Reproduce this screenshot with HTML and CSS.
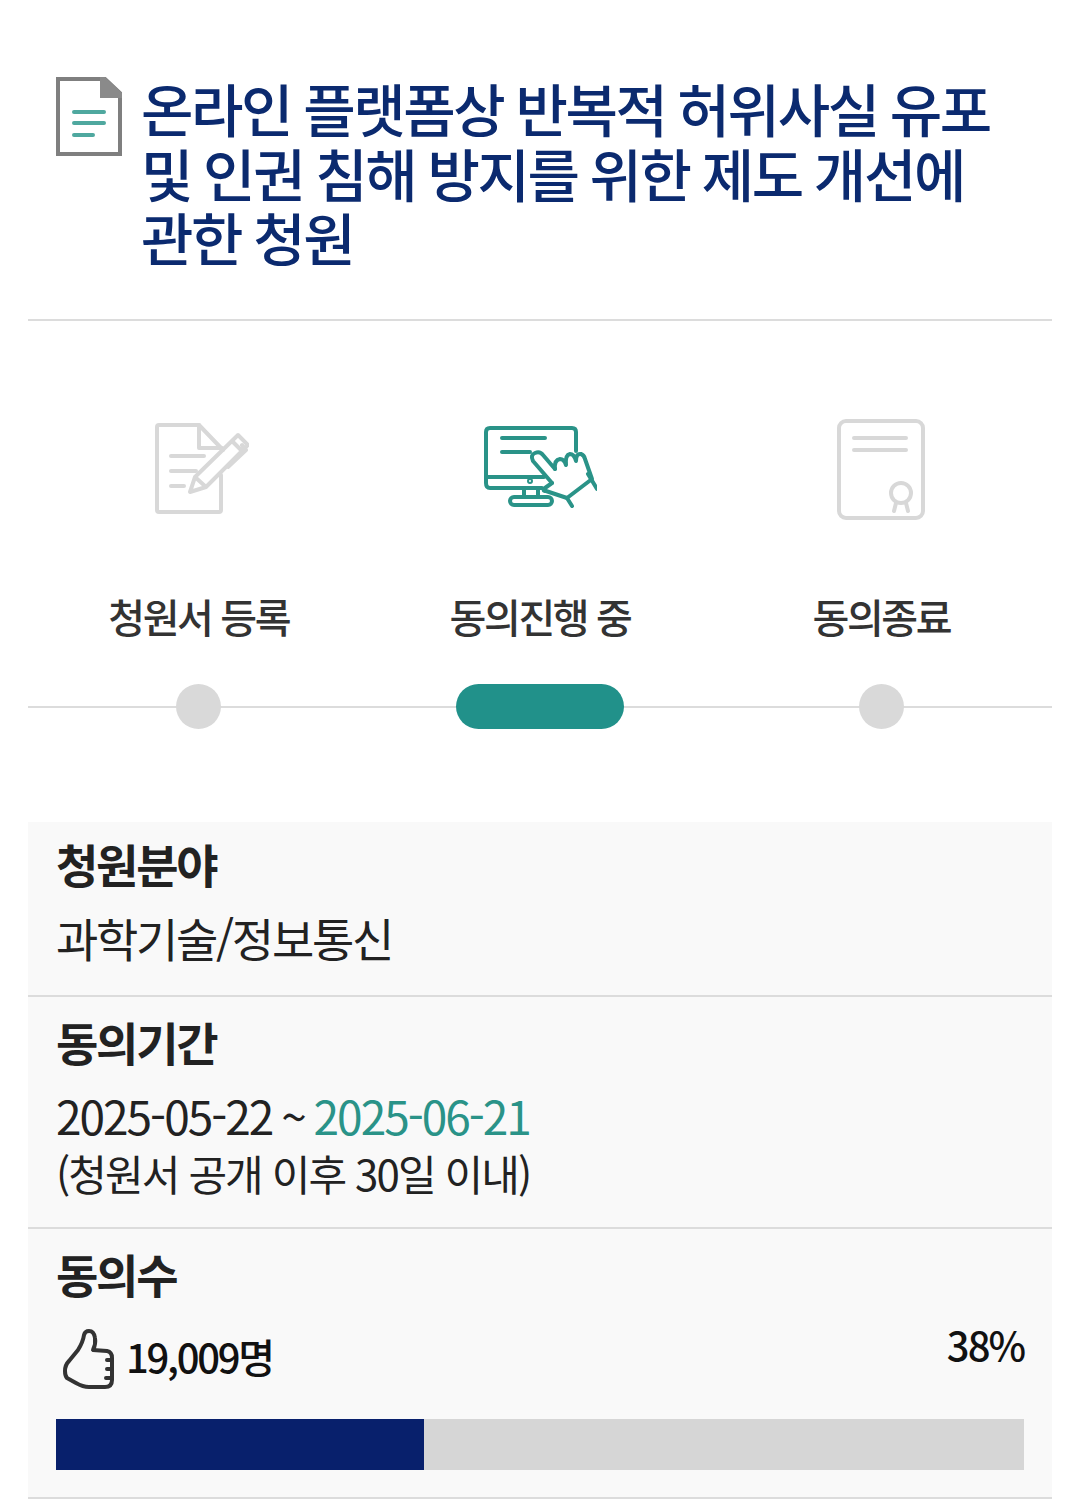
FILE: index.html
```html
<!DOCTYPE html>
<html lang="ko">
<head>
  <meta charset="UTF-8" />
  <meta name="viewport" content="width=device-width, initial-scale=1.0" />
  <title>청원 상세</title>
  <link rel="stylesheet" href="styles.css">
</head>
<body>
  <div class="title-box">
    <svg class="doc-icon" viewBox="0 0 66 80" width="66" height="80">
      <path d="M2 3H49L64 17V78H2Z" fill="#fff" stroke="#7f7f7f" stroke-width="4"/>
      <path d="M44 1V22H66V17L49 1Z" fill="#8a8a8a"/>
      <path d="M18 36H48M18 47H48M18 59H37" stroke="#4fa89f" stroke-width="4" stroke-linecap="round" fill="none"/>
    </svg>
    <h1 class="title">온라인 플랫폼상 반복적 허위사실 유포 및 인권 침해 방지를 위한 제도 개선에 관한 청원</h1>
  </div>

  <div class="steps">
    <div class="step">
      <svg class="step-icon" viewBox="-5 0 100 100" width="100" height="100" fill="none" stroke="#d8d8d8" stroke-width="4" stroke-linecap="round" stroke-linejoin="round">
        <path d="M67 55V90Q67 92 65 92H5Q3 92 3 90V7Q3 5 5 5H45L69 30"/>
        <path d="M45 5V28H68"/>
        <path d="M17 36H50M17 51H42M17 66H30"/>
        <path d="M36 72L41 57L84 15L94 25L52 67ZM41 57L52 67M78 21L88 31M88 25L92 30L74 47"/>
      </svg>
      <span class="step-label">청원서 등록</span>
    </div>
    <div class="step">
      <svg class="step-icon" viewBox="-1 0 114 90" width="114" height="90" fill="none" stroke="#2a9388" stroke-width="4" stroke-linecap="round" stroke-linejoin="round">
        <path d="M92 26V7Q92 3 88 3H6Q2 3 2 7V58Q2 63 6 63H58"/>
        <path d="M2 52H60"/>
        <path d="M18 13H61M18 27H46"/>
        <path d="M40 63V72M54 63V72"/>
        <rect x="26" y="72" width="42" height="8" rx="4"/>
        <circle cx="46" cy="56" r="1" />
        <path d="M68 58L49 36Q46 30 51 28Q56 26 59 30L71 44"/>
        <path d="M71 44Q70 35 76 34Q80 34 82 40Q81 30 86 29Q90 29 92 36Q92 28 97 29Q100 30 101 34L108 54L83 73"/>
        <path d="M68 58L61 63Q58 66 62 66L83 73L88 81M104 49L113 64"/>
      </svg>
      <span class="step-label">동의진행 중</span>
    </div>
    <div class="step">
      <svg class="step-icon" viewBox="0 0 90 104" width="90" height="104" fill="none" stroke="#d8d8d8" stroke-width="4" stroke-linecap="round" stroke-linejoin="round">
        <rect x="3" y="3" width="84" height="97" rx="7"/>
        <path d="M18 20H70M18 32H70"/>
        <circle cx="65" cy="75" r="10"/>
        <path d="M60 85L58 93M70 85L72 93"/>
      </svg>
      <span class="step-label">동의종료</span>
    </div>
  </div>

  <div class="track">
    <span class="dot"></span>
    <span class="dot dot-active"></span>
    <span class="dot"></span>
  </div>

  <div class="info">
    <div class="info-row">
      <h2>청원분야</h2>
      <p class="value">과학기술/정보통신</p>
    </div>
    <div class="info-row">
      <h2>동의기간</h2>
      <p class="value date">2025-05-22 ~ <span class="teal">2025-06-21</span></p>
      <p class="note">(청원서 공개 이후 30일 이내)</p>
    </div>
    <div class="info-row">
      <h2>동의수</h2>
      <div class="count-line">
        <div class="count">
          <svg class="thumb" viewBox="0 -3 52 62" width="52" height="62" fill="none" stroke="#333" stroke-width="4" stroke-linejoin="round" stroke-linecap="round">
            <path d="M3 43Q3 37 7 33L16 22Q21 14 22 7Q23 3 27 3Q32 3 33 10Q34 16 31 22L45 23Q50 24 50 30V52Q50 59 43 59H27Q21 59 14 55L5 50Q3 48 3 43Z"/>
            <path d="M45 32H50M45 41H50M44 50H49"/>
          </svg>
          <span>19,009명</span>
        </div>
        <span class="percent">38%</span>
      </div>
      <div class="bar"><div class="bar-fill" style="width: 38%"></div></div>
    </div>
  </div>
</body>
</html>
```

FILE: styles.css
```css
* {
  box-sizing: border-box;
}
body {
  font-family: "Noto Sans CJK KR", "Noto Sans", sans-serif;
  margin: 0;
  padding: 0 28px;
  background: #fff;
  color: #111;
}
.title-box {
  display: flex;
  align-items: flex-start;
  gap: 19px;
  height: 321px;
  padding: 76px 28px 0;
  border-bottom: 2px solid #dcdcdc;
}
.doc-icon {
  flex: none;
  filter: blur(0.4px);
}
.title {
  margin: -1px 0 0;
  font-size: 57px;
  font-weight: 500;
  line-height: 64.5px;
  letter-spacing: -2.4px;
  word-spacing: -1.5px;
  color: #0b2a6f;
}
.steps {
  display: grid;
  grid-template-columns: repeat(3, 1fr);
  margin-top: 97px;
  height: 243px;
}
.step {
  display: flex;
  flex-direction: column;
  align-items: center;
}
.step-icon {
  height: 104px;
  filter: blur(0.6px);
}
.step-label {
  margin-top: 69px;
  font-size: 40px;
  font-weight: 500;
  line-height: 50px;
  letter-spacing: -2.4px;
  color: #333;
}
.track {
  display: grid;
  grid-template-columns: repeat(3, 1fr);
  justify-items: center;
  align-items: center;
  height: 45px;
  margin-top: 23px;
  background: linear-gradient(#dcdcdc, #dcdcdc) center / 100% 2px no-repeat;
}
.dot {
  width: 45px;
  height: 45px;
  border-radius: 50%;
  background: #d9d9d9;
}
.dot-active {
  width: 168px;
  border-radius: 23px;
  background: #21918a;
}
.info {
  margin-top: 93px;
  background: #f9f9f9;
}
.info-row {
  padding: 15px 28px 27px;
  border-bottom: 2px solid #dcdcdc;
}
.info-row:first-child {
  padding: 12px 28px 29px;
}
.info-row h2 {
  margin: 0;
  font-size: 46px;
  font-weight: 700;
  line-height: 58px;
  letter-spacing: -2.2px;
  color: #222;
}
.value {
  margin: 16px 0 0;
  font-size: 46px;
  font-weight: 400;
  line-height: 58px;
  letter-spacing: -2.3px;
  color: #222;
}
.date {
  letter-spacing: -2px;
  word-spacing: -2px;
}
.note {
  margin: 2px 0 0;
  font-size: 42px;
  line-height: 54px;
  letter-spacing: -1.9px;
  color: #222;
}
.teal {
  color: #2a9388;
}
.count-line {
  display: flex;
  justify-content: space-between;
  align-items: flex-start;
  margin-top: 13px;
}
.count {
  display: flex;
  align-items: center;
  gap: 12px;
  margin-top: 10px;
  font-size: 40px;
  font-weight: 500;
  letter-spacing: -2.3px;
  color: #111;
}
.thumb {
  margin-left: 6px;
  overflow: visible;
  filter: blur(0.5px);
}
.percent {
  font-size: 40px;
  font-weight: 500;
  letter-spacing: -2px;
  color: #111;
}
.bar {
  height: 51px;
  margin-top: 32px;
  background: #d6d6d6;
}
.bar-fill {
  height: 100%;
  background: #08206c;
}
```
